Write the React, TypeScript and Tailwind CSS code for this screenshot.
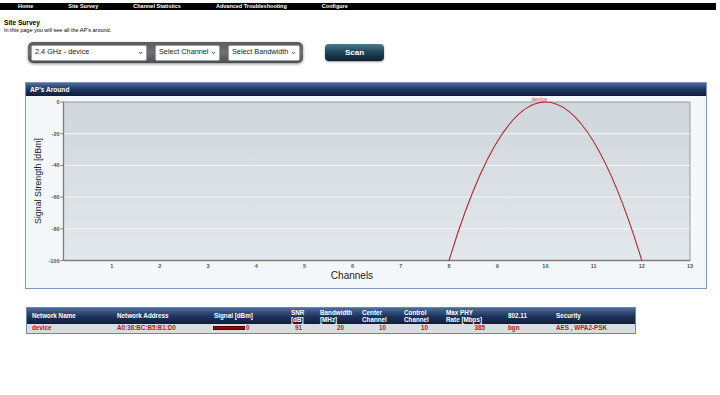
const navItems = ["Home", "Site Survey", "Channel Statistics", "Advanced Troubleshooting", "Configure"];

const yTicks = [0, -20, -40, -60, -80, -100];
const plot = { left: 63.5, right: 690, top: 102, bottom: 260.5 };

function yPos(v: number) {
  return plot.top + ((0 - v) / 100) * (plot.bottom - plot.top);
}
function xPos(ch: number) {
  return plot.left + (ch / 13) * (plot.right - plot.left);
}

function SelectBox({ label, width }: { label: string; width: string }) {
  return (
    <div className={`${width} h-[16px] bg-white border border-[#9aa0a6] rounded-[2px] flex items-center justify-between pl-[3px] pr-[3px] text-[7.3px] text-[#222]`}>
      <span>{label}</span>
      <svg width="5" height="4" viewBox="0 0 5 4">
        <path d="M0.8 1 L2.5 2.7 L4.2 1" fill="none" stroke="#333" strokeWidth="0.9" />
      </svg>
    </div>
  );
}

function Chart() {
  // the svg is drawn in page coordinates, shifted by the panel body origin
  return (
    <svg width="680" height="192" viewBox="26 96 680 192" className="block">
      <defs>
        <linearGradient id="plotbg" x1="0" y1="0" x2="0" y2="1">
          <stop offset="0" stopColor="#cfd6dc" />
          <stop offset="1" stopColor="#e3e8ec" />
        </linearGradient>
      </defs>
      <rect x={plot.left} y={plot.top} width={plot.right - plot.left} height={plot.bottom - plot.top} fill="url(#plotbg)" stroke="#9a9a9a" strokeWidth="1" />
      {yTicks.slice(1, 5).map((v) => (
        <line key={v} x1={plot.left} x2={plot.right} y1={yPos(v)} y2={yPos(v)} stroke="#f4f6f8" strokeWidth="1" />
      ))}
      <line x1={plot.left} x2={plot.left} y1={plot.top} y2={plot.bottom} stroke="#7c7c7c" strokeWidth="1.3" />
      <line x1={plot.left} x2={plot.right} y1={plot.bottom} y2={plot.bottom} stroke="#7c7c7c" strokeWidth="1.3" />
      {yTicks.map((v) => (
        <g key={v}>
          <line x1={plot.left - 3} x2={plot.left} y1={yPos(v)} y2={yPos(v)} stroke="#7c7c7c" strokeWidth="1" />
          <text x={plot.left - 4} y={yPos(v) + 2} textAnchor="end" fontSize="5.5" fill="#555" fontWeight="bold">{v}</text>
        </g>
      ))}
      {Array.from({ length: 13 }, (_, i) => i + 1).map((c) => (
        <text key={c} x={xPos(c)} y={268} textAnchor="middle" fontSize="5.5" fill="#555" fontWeight="bold">{c}</text>
      ))}
      <text x={352} y={279} textAnchor="middle" fontSize="10" fill="#222">Channels</text>
      <text x={0} y={0} transform="translate(41,181) rotate(-90)" textAnchor="middle" fontSize="9.5" textLength="86" lengthAdjust="spacingAndGlyphs" fill="#222">Signal Strength [dBm]</text>
      <path d={`M${xPos(8)} ${plot.bottom} Q${xPos(10)} ${2 * plot.top - plot.bottom} ${xPos(12)} ${plot.bottom}`} fill="none" stroke="#b5262b" strokeWidth="1.1" />
      <text x={xPos(10) - 6} y={101} textAnchor="middle" fontSize="5.5" fill="#c0454a">device</text>
    </svg>
  );
}

const headerCells: { label: string[]; w: string }[] = [
  { label: ["Network Name"], w: "w-[85px]" },
  { label: ["Network Address"], w: "w-[97px]" },
  { label: ["Signal [dBm]"], w: "w-[77px]" },
  { label: ["SNR", "[dB]"], w: "w-[29px]" },
  { label: ["Bandwidth", "[MHz]"], w: "w-[42px]" },
  { label: ["Center", "Channel"], w: "w-[42px]" },
  { label: ["Control", "Channel"], w: "w-[42px]" },
  { label: ["Max PHY", "Rate [Mbps]"], w: "w-[62px]" },
  { label: ["802.11"], w: "w-[48px]" },
  { label: ["Security"], w: "flex-1" },
];

export default function App() {
  return (
    <div className="w-[720px] h-[395px] bg-white overflow-hidden" style={{ fontFamily: '"Liberation Sans", Arial, sans-serif' }}>
      {/* top menu */}
      <div className="pt-[3px]">
        <div className="w-[716px] h-[7px] bg-black flex items-center gap-[35px] pl-[18px] text-[5.5px] font-bold text-white leading-none">
          {navItems.map((n) => (
            <span key={n}>{n}</span>
          ))}
        </div>
      </div>

      <div className="pl-[4px] pt-[9px]">
        <div className="text-[6.6px] font-bold leading-[8px] text-black">Site Survey</div>
        <div className="text-[5.5px] leading-[7px] text-black">In this page you will see all the AP's around.</div>
      </div>

      {/* selectors */}
      <div className="flex items-center pl-[28px] pt-[8px]">
        <div className="w-[275px] h-[21px] rounded-[5px] bg-gradient-to-b from-[#5a5c60] via-[#6e7074] to-[#4c4e52] shadow-[0_1px_3px_rgba(0,0,0,0.45)] flex items-center pl-[3px] gap-[8px]">
          <SelectBox label="2.4 GHz - device" width="w-[116px]" />
          <SelectBox label="Select Channel" width="w-[65px]" />
          <SelectBox label="Select Bandwidth" width="w-[72px]" />
        </div>
        <div className="ml-[22px] w-[59px] h-[17px] rounded-[4px] bg-gradient-to-b from-[#4a7b90] via-[#1f4459] to-[#0e2030] shadow-[0_1px_2px_rgba(0,0,0,0.4)] flex items-center justify-center text-white font-bold text-[8px]">
          Scan
        </div>
      </div>

      {/* AP's Around */}
      <div className="ml-[25px] mt-[19px] w-[682px] border border-[#7e97bd]">
        <div className="h-[13px] bg-gradient-to-b from-[#4d6c9b] via-[#1f3660] to-[#0f1d3a] text-white font-bold text-[6.6px] flex items-center pl-[4px]">
          AP's Around
        </div>
        <div className="bg-[#f5f8fa] h-[192px]">
          <Chart />
        </div>
      </div>

      {/* table */}
      <div className="ml-[26px] mt-[18px] w-[610px] border border-[#6b86b0]">
        <div className="h-[16px] bg-gradient-to-b from-[#4d6c9b] via-[#1f3660] to-[#0f1d3a] flex items-center text-white font-bold text-[6.3px] leading-[7.5px]">
          {headerCells.map((h, i) => (
            <div key={i} className={`${h.w} pl-[5px]`}>
              {h.label.map((l) => (
                <div key={l}>{l}</div>
              ))}
            </div>
          ))}
        </div>
        <div className="h-[9px] bg-[#d9dde2] flex items-center text-[#b3191e] font-bold text-[6.3px] leading-none">
          <div className="w-[85px] pl-[5px]">device</div>
          <div className="w-[97px] pl-[5px]">A0:36:BC:B5:B1:D0</div>
          <div className="w-[77px] pl-[4px] flex items-center">
            <div className="w-[32px] h-[4px] bg-[#8a0a0a] border border-[#5a0000]" />
            <span className="ml-[1px]">0</span>
          </div>
          <div className="w-[29px] text-right pr-[13px]">91</div>
          <div className="w-[42px] text-right pr-[13px]">20</div>
          <div className="w-[42px] text-right pr-[13px]">10</div>
          <div className="w-[42px] text-right pr-[13px]">10</div>
          <div className="w-[62px] text-right pr-[18px]">385</div>
          <div className="w-[48px] pl-[5px]">bgn</div>
          <div className="flex-1 pl-[5px]">AES , WPA2-PSK</div>
        </div>
      </div>
    </div>
  );
}
